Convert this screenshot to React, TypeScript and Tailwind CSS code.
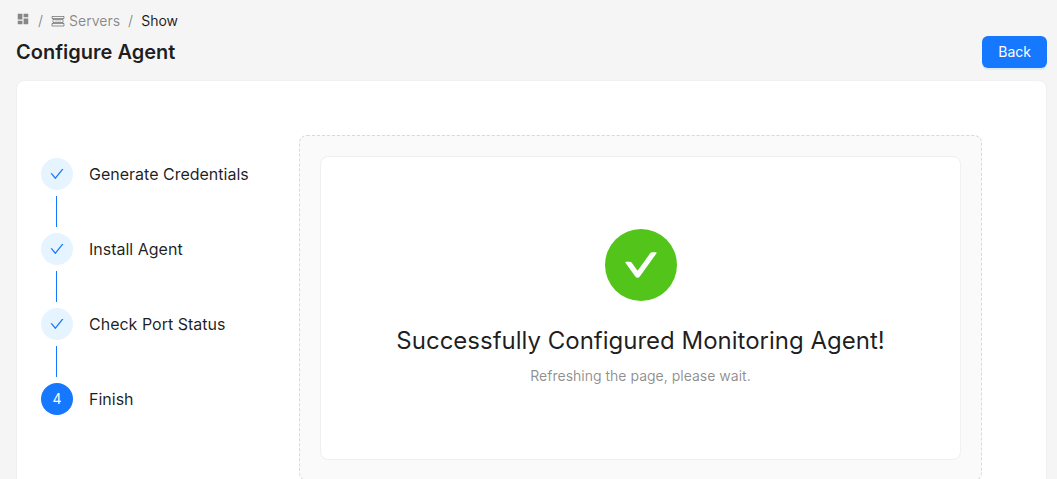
import React from "react";

const steps = ["Generate Credentials", "Install Agent", "Check Port Status", "Finish"];
const current = 3;

function DashboardIcon() {
  return (
    <svg viewBox="0 0 24 24" className="size-[14px]" fill="currentColor" aria-hidden="true">
      <path d="M3 13h8V3H3v10zm0 8h8v-6H3v6zm10 0h8V11h-8v10zm0-18v6h8V3h-8z" />
    </svg>
  );
}

function ServersIcon() {
  return (
    <svg viewBox="0 0 14 14" className="size-[14px]" fill="none" stroke="currentColor" strokeWidth="0.9" aria-hidden="true">
      <path d="M1 2.5h12v2H1zM2 5.5h10v3H2zM1 9.5h12v2.5H1z" />
      <path d="M4 7h6" strokeWidth="0.5" />
    </svg>
  );
}

function CheckIcon() {
  return (
    <svg viewBox="64 64 896 896" className="size-[14px]" fill="currentColor" role="img" aria-label="Done">
      <path d="M912 190h-69.9c-9.8 0-19.1 4.5-25.1 12.2L404.7 724.5 207 474a32 32 0 0 0-25.1-12.2H112c-6.7 0-10.4 7.7-6.3 12.9l273.9 347c12.8 16.2 37.4 16.2 50.3 0l488.4-618.9c4.1-5.1.4-12.8-6.3-12.8z" />
    </svg>
  );
}

function SuccessIcon() {
  return (
    <svg viewBox="64 64 896 896" className="size-[72px] text-[#52c41a]" role="img" aria-label="Success">
      <circle cx="512" cy="512" r="448" fill="currentColor" />
      <path
        fill="#fff"
        d="M699 353h-46.9c-10.2 0-19.9 4.9-25.9 13.3L469 584.3l-71.2-98.8c-6-8.3-15.6-13.3-25.9-13.3H325c-6.5 0-10.3 7.4-6.5 12.7l124.6 172.8a31.8 31.8 0 0 0 51.7 0l210.6-292c3.9-5.3.1-12.7-6.4-12.7z"
      />
    </svg>
  );
}

function Breadcrumb() {
  return (
    <nav aria-label="Breadcrumb">
      <ol className="flex items-center gap-2 text-sm leading-[22px] text-black/45">
        <li className="pb-1">
          <a href="#" aria-label="Dashboard">
            <DashboardIcon />
          </a>
        </li>
        <li aria-hidden="true">/</li>
        <li>
          <a href="#" className="flex items-center gap-1">
            <ServersIcon />
            Servers
          </a>
        </li>
        <li aria-hidden="true">/</li>
        <li aria-current="page" className="text-black/88">Show</li>
      </ol>
    </nav>
  );
}

function Steps() {
  return (
    <ol className="w-[218px] shrink-0 pt-[23px]">
      {steps.map((title, i) => (
        <li key={title} className="flex gap-4">
          <div className="flex flex-col items-center">
            <span
              className={
                i < current
                  ? "flex size-8 items-center justify-center rounded-full bg-[#e6f4ff] text-[#1677ff]"
                  : "flex size-8 items-center justify-center rounded-full bg-[#1677ff] text-sm text-white"
              }
            >
              {i < current ? <CheckIcon /> : i + 1}
            </span>
            {i < steps.length - 1 && <span className="my-[6px] mr-px h-[31px] w-px bg-[#1677ff]" />}
          </div>
          <span className="text-base leading-8">{title}</span>
        </li>
      ))}
    </ol>
  );
}

export default function App() {
  return (
    <div className="flex h-screen flex-col overflow-hidden bg-[#f5f5f5] pr-[10px] pl-4 pt-[10px] font-['Inter',sans-serif] text-black/88">
      <Breadcrumb />
      <header className="mt-1 flex items-center justify-between">
        <h1 className="text-xl leading-8 font-semibold">Configure Agent</h1>
        <button type="button" className="h-8 rounded-md bg-[#1677ff] px-4 text-sm text-white shadow-[0_2px_0_rgba(5,145,255,0.1)]">
          Back
        </button>
      </header>
      <main className="mt-3 flex shrink-0 items-start gap-10 rounded-lg border border-[#f0f0f0] bg-white px-6 py-[54px]">
        <Steps />
        <section className="mr-10 min-w-0 flex-1 rounded-lg border border-dashed border-[#d9d9d9] bg-[#fafafa] p-5">
          <div className="flex flex-col items-center rounded-lg border border-[#f0f0f0] bg-white px-8 py-[72px] text-center">
            <SuccessIcon />
            <h2 className="mt-6 text-2xl leading-8">Successfully Configured Monitoring Agent!</h2>
            <p className="mt-2 text-sm leading-[22px] text-black/45">Refreshing the page, please wait.</p>
          </div>
        </section>
      </main>
    </div>
  );
}
